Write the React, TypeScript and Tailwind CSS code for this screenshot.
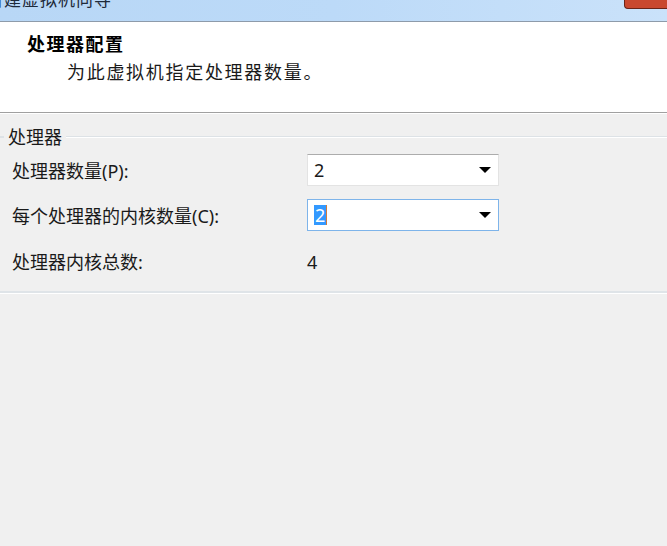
import React from 'react';

const Select: React.FC<{ value: string; focused?: boolean }> = ({ value, focused }) => (
  <div
    className={
      'w-[192px] h-[32px] bg-white flex items-center justify-between pl-[6px] pr-[6px] border ' +
      (focused ? 'border-[#7eb4ea]' : 'border-[#e3e3e3] border-t-[#acacac]')
    }
  >
    {focused ? (
      <span className="flex items-center">
        <span className="bg-[#3399ff] text-white leading-[20px] px-[1px]">{value}</span>
        <span className="w-[1px] h-[20px] bg-[#d07a3c]" />
      </span>
    ) : (
      <span className="leading-[20px]">{value}</span>
    )}
    <svg width="14" height="8" viewBox="0 0 14 8">
      <path d="M1 1 H13 L7 7 Z" fill="#000" />
    </svg>
  </div>
);

export default function App() {
  return (
    <div
      className="w-[667px] h-[546px] bg-[#f0f0f0] overflow-hidden text-[#1a1a1a]"
      style={{ fontFamily: '"Noto Sans", "Noto Sans CJK SC", sans-serif' }}
    >
      {/* Title bar */}
      <div className="relative h-[22px] border-b border-[#8e9baa] bg-gradient-to-r from-[#b8d7f6] via-[#bcdaf8] to-[#cae2fa] overflow-hidden">
        <div className="ml-[-14px] mt-[-12px] text-[17px] leading-[24px] text-[#1e2a3a] tracking-[1px]">
          新建虚拟机向导
        </div>
        <div className="absolute right-0 top-0 w-[43px] h-[9px] bg-[#c9482f] border-l border-b border-[#6b2418] rounded-bl-[4px]" />
      </div>

      {/* Header */}
      <div className="h-[91px] bg-white border-b border-[#a0a0a0] pl-[27px] pt-[10px]">
        <div className="font-bold text-[18px] leading-[24px] tracking-[1.5px] text-black">处理器配置</div>
        <div className="ml-[40px] mt-[4px] text-[18px] leading-[24px] tracking-[1.7px] text-[#1a1a1a]">
          为此虚拟机指定处理器数量。
        </div>
      </div>
      <div className="h-[1px] bg-white" />

      {/* Body */}
      <div className="pt-[11px]">
        <div className="flex items-center h-[24px]">
          <div className="w-[4px] h-[2px] bg-[#dde2e6]" />
          <div className="px-[4px] text-[18px] leading-[24px]">处理器</div>
          <div className="flex-1 h-[2px] bg-[#dde2e6] border-b border-white" />
        </div>

        <div className="flex flex-col mt-[5px] text-[18px]">
          <div className="flex items-center h-[32px]">
            <div className="w-[307px] pl-[12px] pt-[2px]">处理器数量(P):</div>
            <Select value="2" />
          </div>
          <div className="flex items-center h-[32px] mt-[13px]">
            <div className="w-[307px] pl-[12px] pt-[2px]">每个处理器的内核数量(C):</div>
            <Select value="2" focused />
          </div>
          <div className="flex items-center h-[32px] mt-[15px]">
            <div className="w-[307px] pl-[12px]">处理器内核总数:</div>
            <div>4</div>
          </div>
        </div>

        <div className="mt-[13px] h-[3px] bg-[#dfe4e8] border-b border-white" />
      </div>
    </div>
  );
}
